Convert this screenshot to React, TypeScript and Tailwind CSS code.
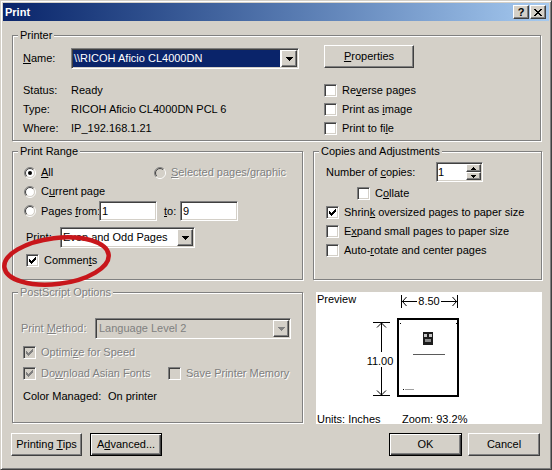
import type { ReactNode } from 'react';

const raised =
  'border border-t-white border-l-white border-r-[#404040] border-b-[#404040] bg-[#d4d0c8] shadow-[inset_-1px_-1px_0_#808080]';
const defaultRaised =
  'border border-black bg-[#d4d0c8] shadow-[inset_1px_1px_0_#fff,inset_-1px_-1px_0_#404040,inset_-2px_-2px_0_#808080]';
const sunken =
  'border border-t-[#808080] border-l-[#808080] border-r-white border-b-white shadow-[inset_1px_1px_0_#404040,inset_-1px_-1px_0_#d4d0c8]';
const dim = 'text-[#808080] [text-shadow:1px_1px_0_#fff]';

const checkRows = ['......#', '.....##', '#...###', '##.###.', '#####..', '.###...', '..#....'];
const downRows = ['#######', '.#####.', '..###..', '...#...'];
const spinUp = ['..#..', '.###.', '#####'];
const spinDown = ['#####', '.###.', '..#..'];
const closeRows = ['##....##', '.##..##.', '..####..', '...##...', '..####..', '.##..##.', '##....##'];

function U({ children }: { children: ReactNode }) {
  return <span className="underline">{children}</span>;
}

function Pixels({ rows, color = '#000' }: { rows: string[]; color?: string }) {
  return (
    <svg width={rows[0].length} height={rows.length} shapeRendering="crispEdges" className="block">
      {rows.flatMap((row, y) =>
        row.split('').map((c, x) =>
          c === '#' ? <rect key={`${x}-${y}`} x={x} y={y} width="1" height="1" fill={color} /> : null,
        ),
      )}
    </svg>
  );
}

function CheckBox({ checked = false, disabled = false }: { checked?: boolean; disabled?: boolean }) {
  return (
    <span
      className={`flex h-[13px] w-[13px] shrink-0 items-center justify-center ${sunken} ${
        disabled ? 'bg-[#d4d0c8]' : 'bg-white'
      }`}
    >
      {checked ? <Pixels rows={checkRows} color={disabled ? '#808080' : '#000'} /> : null}
    </span>
  );
}

function Radio({ checked = false, disabled = false }: { checked?: boolean; disabled?: boolean }) {
  const arc = (r: number) => {
    const d = r / Math.SQRT2;
    return { a: `${6 - d} ${6 + d}`, b: `${6 + d} ${6 - d}` };
  };
  const o = arc(5.5);
  const i = arc(4.5);
  return (
    <svg width="12" height="12" viewBox="0 0 12 12" className="block shrink-0">
      <circle cx="6" cy="6" r="4.5" fill={disabled ? '#d4d0c8' : '#fff'} />
      <path d={`M${o.a} A5.5 5.5 0 0 1 ${o.b}`} stroke="#808080" fill="none" />
      <path d={`M${o.b} A5.5 5.5 0 0 1 ${o.a}`} stroke="#fff" fill="none" />
      <path d={`M${i.a} A4.5 4.5 0 0 1 ${i.b}`} stroke="#404040" fill="none" />
      <path d={`M${i.b} A4.5 4.5 0 0 1 ${i.a}`} stroke="#d4d0c8" fill="none" />
      {checked ? <circle cx="6" cy="6" r="2" fill={disabled ? '#808080' : '#000'} /> : null}
    </svg>
  );
}

function Btn({ children, className = '', def = false }: { children: ReactNode; className?: string; def?: boolean }) {
  return (
    <button
      type="button"
      className={`flex h-[23px] shrink-0 items-center justify-center whitespace-nowrap ${def ? defaultRaised : raised} ${className}`}
    >
      <span>{children}</span>
    </button>
  );
}

function DropBtn({ disabled = false }: { disabled?: boolean }) {
  return (
    <span className={`flex h-[17px] w-[16px] shrink-0 items-center justify-center ${raised}`}>
      <Pixels rows={downRows} color={disabled ? '#808080' : '#000'} />
    </span>
  );
}

function Select({
  text,
  className = '',
  selected = false,
  disabled = false,
}: {
  text: string;
  className?: string;
  selected?: boolean;
  disabled?: boolean;
}) {
  return (
    <div className={`flex h-[21px] shrink-0 p-[1px] ${sunken} ${disabled ? 'bg-[#d4d0c8]' : 'bg-white'} ${className}`}>
      <div
        className={`flex flex-1 items-center overflow-hidden whitespace-nowrap ${
          selected ? 'mr-[1px] bg-[#0a246a] pl-[1px] text-white' : 'pl-[1px]'
        } ${disabled ? 'pl-[2px] text-[#808080]' : ''}`}
      >
        {text}
      </div>
      <DropBtn disabled={disabled} />
    </div>
  );
}

function TextBox({ value, className = '' }: { value: string; className?: string }) {
  return (
    <div className={`flex h-[20px] shrink-0 items-center bg-white p-[1px] pl-[2px] ${sunken} ${className}`}>{value}</div>
  );
}

function SpinBtn({ rows }: { rows: string[] }) {
  return (
    <span className={`flex h-[8px] w-[15px] items-center justify-center ${raised}`}>
      <Pixels rows={rows} />
    </span>
  );
}

function Group({
  label,
  disabled = false,
  className = '',
  children,
}: {
  label: string;
  disabled?: boolean;
  className?: string;
  children: ReactNode;
}) {
  return (
    <div className={`relative shrink-0 border border-[#808080] shadow-[1px_1px_0_#fff,inset_1px_1px_0_#fff] ${className}`}>
      <span className={`absolute -top-[7px] left-[5px] bg-[#d4d0c8] px-[2px] leading-[13px] ${disabled ? dim : ''}`}>
        {label}
      </span>
      {children}
    </div>
  );
}

function CheckRow({
  checked = false,
  disabled = false,
  className = '',
  children,
}: {
  checked?: boolean;
  disabled?: boolean;
  className?: string;
  children: ReactNode;
}) {
  return (
    <div className={`flex items-center gap-[5px] whitespace-nowrap ${className}`}>
      <CheckBox checked={checked} disabled={disabled} />
      <span className={disabled ? dim : ''}>{children}</span>
    </div>
  );
}

function RadioRow({
  checked = false,
  disabled = false,
  className = '',
  children,
}: {
  checked?: boolean;
  disabled?: boolean;
  className?: string;
  children: ReactNode;
}) {
  return (
    <div className={`flex items-center gap-[5px] whitespace-nowrap ${className}`}>
      <Radio checked={checked} disabled={disabled} />
      <span className={disabled ? dim : ''}>{children}</span>
    </div>
  );
}

function Preview() {
  return (
    <div className="relative ml-[13px] flex h-[132px] w-[226px] shrink-0 flex-col bg-white pl-[1px] pt-[1px]">
      <span>Preview</span>
      <svg width="226" height="132" className="absolute left-0 top-0" fill="#000">
        <rect x="85" y="3" width="1" height="13" />
        <rect x="141" y="3" width="1" height="13" />
        <rect x="86" y="9" width="15" height="1" />
        <rect x="125" y="9" width="16" height="1" />
        <path d="M90.5 5 L86.5 9.5 L90.5 14 M136.5 5 L140.5 9.5 L136.5 14" stroke="#000" fill="none" />
        <text x="113" y="13" textAnchor="middle" fontSize="11">
          8.50
        </text>

        <rect x="57" y="30" width="17" height="1" />
        <rect x="57" y="103" width="17" height="1" />
        <rect x="65" y="31" width="1" height="29" />
        <rect x="65" y="75" width="1" height="28" />
        <path d="M61 35.5 L65.5 31 L70 35.5 M61 98.5 L65.5 103 L70 98.5" stroke="#000" fill="none" />
        <text x="64" y="73" textAnchor="middle" fontSize="11">
          11.00
        </text>

        <rect x="82" y="27" width="60" height="77" fill="none" stroke="#000" strokeWidth="2" />
        <rect x="84" y="31" width="1" height="1" />
        <rect x="140" y="31" width="1" height="1" />
        <rect x="107" y="40" width="10" height="13" fill="#1c1c1c" />
        <rect x="108" y="42" width="3" height="3" fill="#c8c8c8" />
        <rect x="113" y="42" width="3" height="3" fill="#c8c8c8" />
        <rect x="109" y="47" width="6" height="3" fill="#8a8a8a" />
        <rect x="97" y="62" width="32" height="1" fill="#5a5a5a" />
        <rect x="87" y="97" width="1" height="1" />
        <rect x="89" y="97" width="9" height="1" fill="#a0a0a0" />
      </svg>
      <div className="-mb-[2px] mt-auto flex whitespace-nowrap">
        <span className="w-[85px]">Units: Inches</span>
        <span>Zoom: 93.2%</span>
      </div>
    </div>
  );
}

export default function App() {
  return (
    <div className="relative h-[470px] w-[552px] overflow-hidden border border-t-[#d4d0c8] border-l-[#d4d0c8] border-r-[#404040] border-b-[#404040] bg-[#d4d0c8] p-[2px] text-[11px] leading-[13px] text-black shadow-[inset_1px_1px_0_#fff,inset_-1px_-1px_0_#808080] [font-family:'Liberation_Sans',Arial,sans-serif]">
      <div className="flex h-[18px] items-center justify-between bg-linear-to-r from-[#0a246a] to-[#a6caf0] pl-[2px] pr-[3px]">
        <span className="font-bold text-white">Print</span>
        <div className="flex gap-[1px]">
          <span className={`flex h-[14px] w-[16px] items-center justify-center font-bold ${raised}`}>?</span>
          <span className={`flex h-[14px] w-[16px] items-center justify-center ${raised}`}>
            <Pixels rows={closeRows} />
          </span>
        </div>
      </div>

      <div className="px-[9px]">
        <Group label="Printer" className="mt-[14px] h-[106px] w-[529px] pl-[10px] pt-[9px]">
          <div className="flex">
            <div className="mt-[3px] w-[276px]">
              <div className="flex items-center">
                <span className="w-[48px]">
                  <U>N</U>ame:
                </span>
                <Select text={'\\\\RICOH Aficio CL4000DN'} selected className="w-[228px]" />
              </div>
              <div className="mt-[12px]">
                <div className="flex h-[19px] items-center">
                  <span className="w-[48px]">Status:</span>
                  <span>Ready</span>
                </div>
                <div className="flex h-[19px] items-center">
                  <span className="w-[48px]">Type:</span>
                  <span>RICOH Aficio CL4000DN PCL 6</span>
                </div>
                <div className="flex h-[19px] items-center">
                  <span className="w-[48px]">Where:</span>
                  <span>IP_192.168.1.21</span>
                </div>
              </div>
            </div>
            <div className="ml-[25px]">
              <Btn className="w-[90px]">
                <U>P</U>roperties
              </Btn>
              <div className="mt-[13px]">
                <CheckRow className="h-[19px]">
                  Re<U>v</U>erse pages
                </CheckRow>
                <CheckRow className="h-[19px]">
                  Print as <U>i</U>mage
                </CheckRow>
                <CheckRow className="h-[19px]">
                  Print to fi<U>l</U>e
                </CheckRow>
              </div>
            </div>
          </div>
        </Group>

        <div className="mt-[10px] flex gap-[10px]">
          <Group label="Print Range" className="h-[129px] w-[291px] pl-[11px] pt-[11px]">
            <div className="flex h-[19px] items-center">
              <RadioRow checked className="w-[130px]">
                <U>A</U>ll
              </RadioRow>
              <RadioRow disabled>
                <U>S</U>elected pages/graphic
              </RadioRow>
            </div>
            <RadioRow className="h-[19px]">
              C<U>u</U>rrent page
            </RadioRow>
            <div className="flex h-[20px] items-center">
              <RadioRow className="w-[75px]">
                Pages <U>f</U>rom:
              </RadioRow>
              <TextBox value="1" className="w-[58px]" />
              <span className="ml-[7px] w-[16px]">
                <U>t</U>o:
              </span>
              <TextBox value="9" className="w-[58px]" />
            </div>
            <div className="mt-[6px] flex h-[21px] items-center">
              <span className="w-[36px] pl-[2px]">
                P<U>r</U>int:
              </span>
              <Select text="Even and Odd Pages" className="w-[135px]" />
            </div>
            <CheckRow checked className="ml-[2px] mt-[3px] h-[19px]">
              Commen<U>t</U>s
            </CheckRow>
          </Group>

          <Group label="Copies and Adjustments" className="h-[129px] w-[229px] pl-[12px] pt-[10px]">
            <div className="flex h-[20px] items-center">
              <span className="w-[110px]">
                Number of <U>c</U>opies:
              </span>
              <div className={`flex h-[20px] w-[47px] bg-white p-[1px] ${sunken}`}>
                <span className="flex flex-1 items-center">1</span>
                <div className="flex w-[15px] flex-col">
                  <SpinBtn rows={spinUp} />
                  <SpinBtn rows={spinDown} />
                </div>
              </div>
            </div>
            <CheckRow className="ml-[31px] mt-[2px] h-[19px]">
              C<U>o</U>llate
            </CheckRow>
            <CheckRow checked className="h-[19px]">
              Shrin<U>k</U> oversized pages to paper size
            </CheckRow>
            <CheckRow className="h-[19px]">
              E<U>x</U>pand small pages to paper size
            </CheckRow>
            <CheckRow className="h-[19px]">
              Auto-<U>r</U>otate and center pages
            </CheckRow>
          </Group>
        </div>

        <div className="mt-[12px] flex">
          <Group label="PostScript Options" disabled className="h-[131px] w-[291px] pl-[8px] pt-[25px]">
            <div className="flex h-[21px] items-center">
              <span className={`w-[74px] ${dim}`}>
                Print <U>M</U>ethod:
              </span>
              <Select text="Language Level 2" disabled className="w-[196px]" />
            </div>
            <CheckRow checked disabled className="ml-[2px] mt-[3px] h-[21px]">
              Optimi<U>z</U>e for Speed
            </CheckRow>
            <div className="ml-[2px] flex h-[21px] items-center">
              <CheckRow checked disabled className="w-[145px]">
                Do<U>w</U>nload Asian Fonts
              </CheckRow>
              <CheckRow disabled>Save Printer Memory</CheckRow>
            </div>
            <div className="ml-[2px] mt-[3px] flex h-[19px] items-center">
              <span className="w-[85px]">Color Managed:</span>
              <span>On printer</span>
            </div>
          </Group>
          <Preview />
        </div>

        <div className="mt-[9px] flex h-[23px] items-start">
          <Btn className="-ml-[1px] w-[71px]">
            Printing <U>T</U>ips
          </Btn>
          <Btn def className="ml-[8px] w-[72px]">
            A<U>d</U>vanced...
          </Btn>
          <Btn def className="ml-auto w-[73px]">
            OK
          </Btn>
          <Btn className="ml-[6px] w-[72px]">Cancel</Btn>
        </div>
      </div>

      <svg width="552" height="470" className="pointer-events-none absolute -left-px -top-px">
        <ellipse
          cx="56.5"
          cy="261"
          rx="52.5"
          ry="23"
          transform="rotate(-7 56.5 261)"
          fill="none"
          stroke="#c8161b"
          strokeWidth="4.5"
        />
      </svg>
    </div>
  );
}
